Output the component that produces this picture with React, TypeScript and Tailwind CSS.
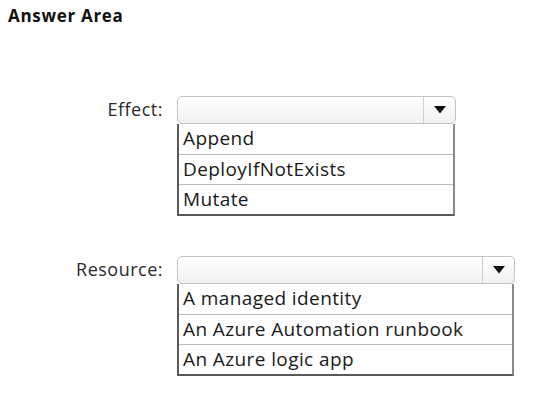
import React from "react";

function Arrow() {
  return (
    <svg width="12" height="8" viewBox="0 0 12 8">
      <polygon points="0,0 12,0 6,7.5" fill="#111" />
    </svg>
  );
}

function Dropdown({ label, width, options }: { label: string; width: number; options: string[] }) {
  return (
    <div className="flex items-start">
      <div className="w-[164px] h-[28px] flex items-center justify-end pr-[1px] text-[18px] text-[#2a2a2a] tracking-[0.5px]">
        {label}
      </div>
      <div className="ml-[13px] flex flex-col" style={{ width }}>
        <div className="h-[28px] flex rounded-[5px] border border-[#c4c4c4] bg-gradient-to-b from-[#ffffff] to-[#f1f1f1]">
          <div className="flex-1" />
          <div className="w-[32px] border-l border-[#cfcfcf] flex items-center justify-center">
            <Arrow />
          </div>
        </div>
        <div className="w-[calc(100%-1px)] border-2 border-t-0 border-[#5a5a5a] border-r-[#8a8a8a] bg-white">
          {options.map((o, i) => (
            <div
              key={o}
              className={
                "h-[30px] flex items-center pl-[4px] text-[19px] text-[#1a1a1a] tracking-[0.4px] " +
                (i > 0 ? "border-t border-[#bdbdbd]" : "")
              }
            >
              {o}
            </div>
          ))}
        </div>
      </div>
    </div>
  );
}

export default function App() {
  return (
    <div className="w-[558px] h-[418px] bg-white" style={{ fontFamily: '"Open Sans", "Noto Sans", sans-serif' }}>
      <div className="pt-[3px] pl-[8px] text-[17px] font-bold text-[#111] tracking-[0.7px]">Answer Area</div>
      <div className="mt-[67px] flex flex-col gap-[40px]">
        <Dropdown label="Effect:" width={279} options={["Append", "DeployIfNotExists", "Mutate"]} />
        <Dropdown
          label="Resource:"
          width={338}
          options={["A managed identity", "An Azure Automation runbook", "An Azure logic app"]}
        />
      </div>
    </div>
  );
}
